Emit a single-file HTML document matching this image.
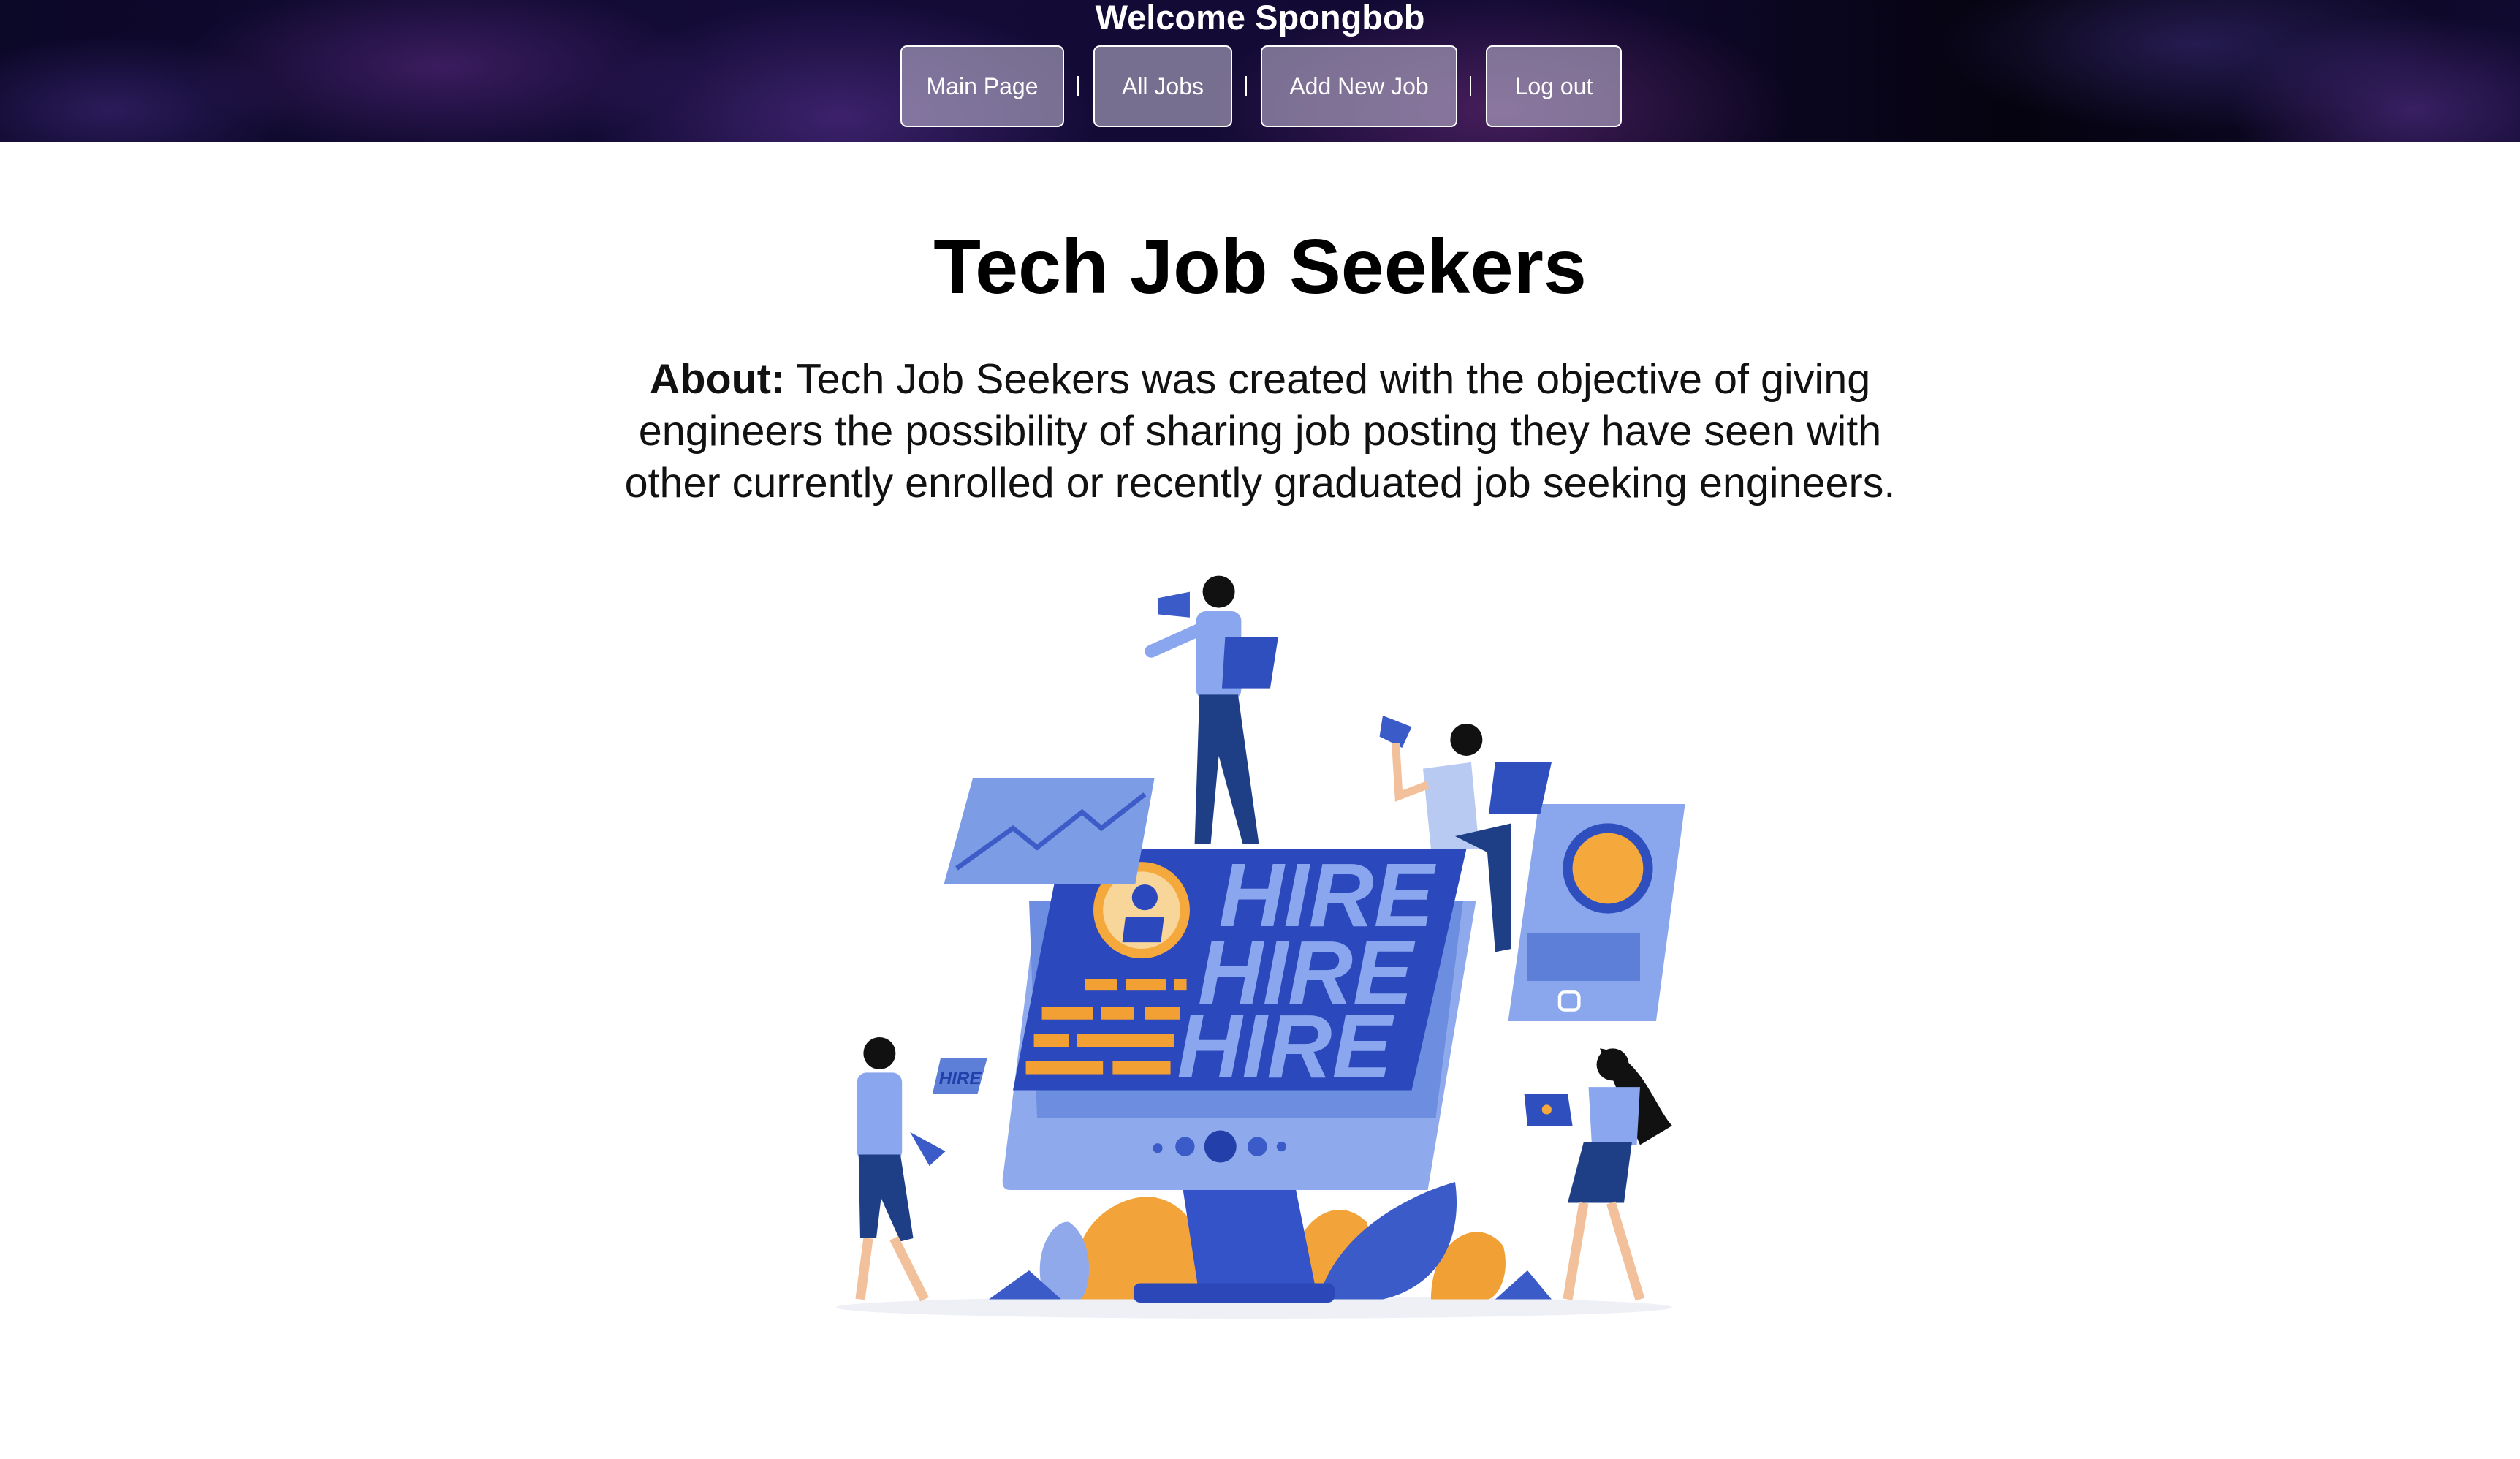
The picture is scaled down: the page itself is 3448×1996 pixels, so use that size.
<!DOCTYPE html>
<html><head><meta charset="utf-8"><style>
html,body{margin:0;padding:0;width:3448px;height:1996px;background:#fff;overflow:hidden;font-family:"Liberation Sans",sans-serif}
header{position:absolute;left:0;top:0;width:3448px;height:194px;
background:
radial-gradient(ellipse 350px 120px at 600px 90px,rgba(110,50,150,.45),transparent),
radial-gradient(ellipse 350px 160px at 1150px 160px,rgba(110,60,170,.45),transparent),
radial-gradient(ellipse 400px 160px at 2050px 150px,rgba(150,60,150,.4),transparent),
radial-gradient(ellipse 350px 120px at 3000px 60px,rgba(80,60,160,.4),transparent),
radial-gradient(ellipse 250px 130px at 3300px 150px,rgba(110,60,170,.45),transparent),
radial-gradient(ellipse 250px 100px at 150px 150px,rgba(80,50,150,.45),transparent),
linear-gradient(90deg,#0c0828,#140c38 30%,#120a34 60%,#05030f 80%,#100a30);}
h1.w{position:absolute;left:0;width:3448px;top:-4px;margin:0;text-align:center;color:#fff;font-size:47px;font-weight:bold;line-height:56px}
.b{position:absolute;top:62px;height:108px;border:2px solid #fff;border-radius:9px;background:rgba(180,172,200,.62);color:#fff;font-size:32px;line-height:108px;text-align:center}
.s{position:absolute;top:104px;width:2px;height:28px;background:#fff}
h2{position:absolute;left:0;width:3448px;top:300px;margin:0;text-align:center;font-size:106px;font-weight:bold;line-height:130px;color:#000}
p{position:absolute;left:824px;width:1800px;top:484px;margin:0;text-align:center;font-size:57.5px;line-height:71px;color:#111}
svg{position:absolute;left:0;top:0}
</style></head><body>
<header>
<h1 class="w">Welcome Spongbob</h1>
<div class="b" style="left:1232px;width:220px">Main Page</div>
<div class="s" style="left:1474px"></div>
<div class="b" style="left:1496px;width:186px">All Jobs</div>
<div class="s" style="left:1704px"></div>
<div class="b" style="left:1725px;width:265px">Add New Job</div>
<div class="s" style="left:2011px"></div>
<div class="b" style="left:2033px;width:182px">Log out</div>
</header>
<h2>Tech Job Seekers</h2>
<p><b>About:</b> Tech Job Seekers was created with the objective of giving engineers the possibility of sharing job posting they have seen with other currently enrolled or recently graduated job seeking engineers.</p>
<svg width="3448" height="1996" viewBox="0 0 1567.3 907.3">
<ellipse cx="780" cy="813" rx="260" ry="7" fill="#eef0f6"/>
<path d="M670 808 C660 760 700 740 720 745 C745 750 760 790 745 808Z" fill="#f2a33a"/>
<path d="M800 808 C800 760 830 740 850 760 C860 790 850 805 840 808Z" fill="#f2a33a"/>
<path d="M890 808 C890 770 920 755 935 775 C940 795 930 808 925 808Z" fill="#f0a035"/>
<path d="M650 808 C640 780 655 758 665 760 C680 770 680 800 672 808Z" fill="#8fa9ea"/>
<path d="M820 808 C830 770 870 745 905 735 C910 770 895 800 860 808Z" fill="#3a5bc8"/>
<path d="M615 808 L640 790 L660 808Z M930 808 L950 790 L965 808Z" fill="#3a5bc8"/>
<path d="M735 735 L805 735 L818 800 L745 800Z" fill="#3553c9"/>
<rect x="705" y="798" width="125" height="12" rx="4" fill="#2c48b8"/>
<path d="M645 560 L918 560 L888 740 L628 740 Q622 740 624 730Z" fill="#8faaec"/>
<path d="M640 560 L910 560 L893 695 L645 695Z" fill="#6d8ee0"/>
<path d="M660 528 L912 528 L878 678 L630 678Z" fill="#2b48bc"/>
<g fill="#8aa6ee" font-family="Liberation Sans,sans-serif" font-weight="bold" font-style="italic" font-size="56">
<text x="758" y="576">HIRE</text><text x="745" y="624">HIRE</text><text x="732" y="670">HIRE</text></g>
<circle cx="710" cy="566" r="30" fill="#f5a83c"/><circle cx="710" cy="566" r="24" fill="#f8d69a"/>
<circle cx="712" cy="558" r="8" fill="#2b48bc"/><path d="M698 586 L700 570 L724 570 L722 586Z" fill="#2b48bc"/>
<g fill="#f2a033"><rect x="675" y="609" width="20" height="7"/><rect x="700" y="609" width="25" height="7"/><rect x="730" y="609" width="8" height="7"/>
<rect x="648" y="626" width="32" height="8"/><rect x="685" y="626" width="20" height="8"/><rect x="712" y="626" width="22" height="8"/>
<rect x="643" y="643" width="22" height="8"/><rect x="670" y="643" width="60" height="8"/>
<rect x="638" y="660" width="48" height="8"/><rect x="692" y="660" width="36" height="8"/></g>
<circle cx="720" cy="714" r="3" fill="#3a5bc8"/><circle cx="737" cy="713" r="6" fill="#3a5bc8"/><circle cx="759" cy="713" r="10" fill="#2340aa"/><circle cx="782" cy="713" r="6" fill="#3a5bc8"/><circle cx="797" cy="713" r="3" fill="#3a5bc8"/>
<path d="M605 484 L718 484 L706 550 L587 550Z" fill="#7c9ce6"/>
<path d="M595 540 L630 515 L645 527 L673 505 L685 515 L712 494" stroke="#3d5cc8" stroke-width="3" fill="none"/>
<path d="M957 500 L1048 500 L1030 635 L938 635Z" fill="#8aa6ec"/>
<circle cx="1000" cy="540" r="28" fill="#2f4fbf"/><circle cx="1000" cy="540" r="22" fill="#f5a83c"/>
<rect x="950" y="580" width="70" height="30" fill="#5d7fd8"/>
<rect x="970" y="617" width="12" height="11" rx="3" fill="none" stroke="#fff" stroke-width="2"/>
<circle cx="758" cy="368" r="10" fill="#111"/><rect x="744" y="380" width="28" height="55" rx="6" fill="#8aa6ee"/>
<path d="M746 432 L770 432 L783 525 L773 525 L758 470 L753 525 L743 525Z" fill="#1e3f86"/>
<path d="M720 372 L740 368 L740 384 L720 382Z" fill="#3a5bc8"/>
<path d="M762 396 L795 396 L790 428 L760 428Z" fill="#2f4fbf"/>
<path d="M716 405 L745 392" stroke="#8aa6ee" stroke-width="8" stroke-linecap="round"/>
<circle cx="912" cy="460" r="10" fill="#111"/><path d="M885 478 L915 474 L920 528 L890 528Z" fill="#b9caf2"/>
<path d="M905 520 L940 512 L940 590 L930 592 L925 530Z" fill="#1e3f86"/>
<path d="M930 474 L965 474 L958 506 L926 506Z" fill="#2f4fbf"/>
<path d="M860 445 L878 452 L872 465 L858 458Z" fill="#3a5bc8"/>
<path d="M868 462 L870 495 L888 488" stroke="#f2c09a" stroke-width="5" fill="none"/>
<circle cx="547" cy="655" r="10" fill="#111"/><rect x="533" y="667" width="28" height="55" rx="6" fill="#8aa6ee"/>
<path d="M534 718 L560 718 L568 770 L560 772 L548 745 L545 770 L535 770Z" fill="#1e3f86"/>
<path d="M540 770 L535 808 M556 770 L575 808" stroke="#f2c09a" stroke-width="6"/>
<path d="M585 658 L614 658 L608 680 L580 680Z" fill="#5d7fd8"/>
<text x="584" y="674" font-size="11" font-weight="bold" font-style="italic" fill="#2340aa" font-family="Liberation Sans,sans-serif">HIRE</text>
<path d="M566 704 L588 716 L578 725Z" fill="#3a5bc8"/>
<path d="M995 652 C1020 655 1030 690 1040 700 L1020 712 Z" fill="#111"/>
<circle cx="1003" cy="662" r="10" fill="#111"/><path d="M988 676 L1020 676 L1018 712 L990 712Z" fill="#8aa6ee"/>
<path d="M985 710 L1015 710 L1010 748 L975 748Z" fill="#1e3f86"/>
<path d="M985 748 L975 808 M1002 748 L1020 808" stroke="#f2c09a" stroke-width="6"/>
<path d="M948 680 L975 680 L978 700 L950 700Z" fill="#2f4fbf"/><circle cx="962" cy="690" r="3" fill="#f5a83c"/>
</svg>
</body></html>
